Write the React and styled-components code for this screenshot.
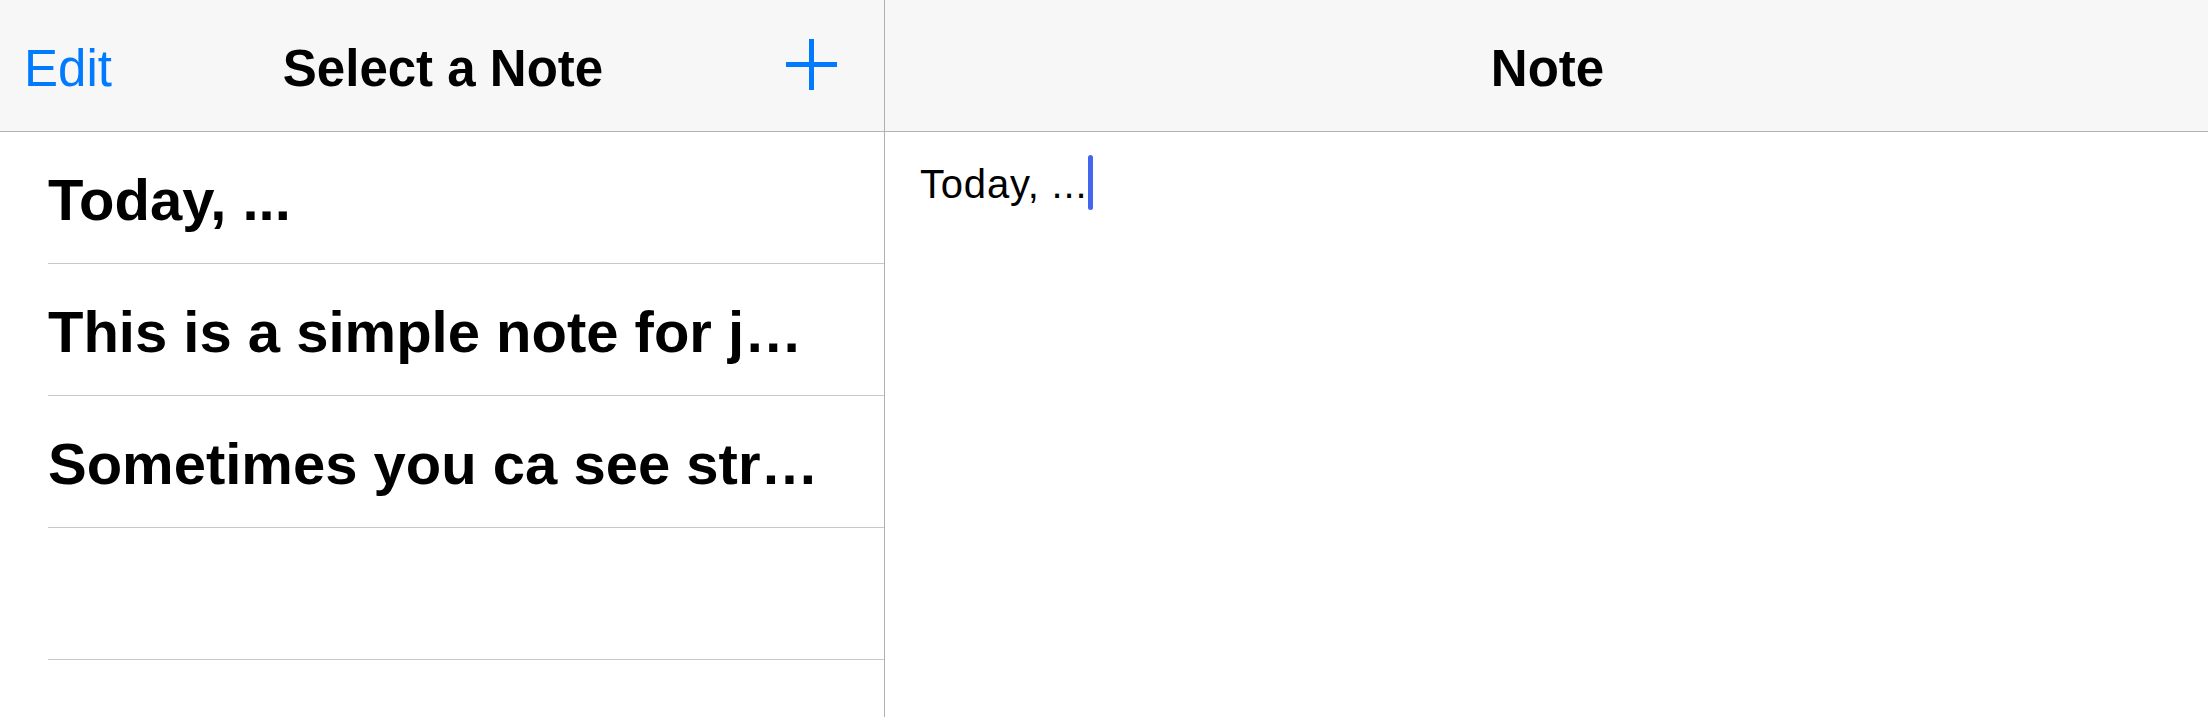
import React from "react";
import styled, { createGlobalStyle } from "styled-components";

const Global = createGlobalStyle`
  html, body { margin: 0; padding: 0; background: #ffffff; }
  body { font-family: "Liberation Sans", Arial, sans-serif; color: #000; }
  * { box-sizing: border-box; }
`;

const Screen = styled.div`
  display: flex;
  width: 2208px;
  height: 717px;
  overflow: hidden;
  background: #ffffff;
`;

const Sidebar = styled.aside`
  width: 885px;
  flex: none;
  display: flex;
  flex-direction: column;
  border-right: 1px solid #b0b0b0;
`;

const Detail = styled.main`
  flex: 1;
  display: flex;
  flex-direction: column;
`;

const NavBar = styled.header`
  height: 132px;
  flex: none;
  padding: 6px 22px 0 24px;
  background: #f7f7f7;
  border-bottom: 1px solid #b4b4b4;
  display: grid;
  grid-template-columns: 1fr auto 1fr;
  align-items: center;
`;

const NavTitle = styled.h1`
  grid-column: 2;
  margin: 0;
  font-size: 51px;
  font-weight: 700;
  line-height: normal;
  white-space: nowrap;
`;

const NavButton = styled.button`
  all: unset;
  grid-column: ${(p) => (p.$right ? 3 : 1)};
  justify-self: ${(p) => (p.$right ? "end" : "start")};
  margin-right: ${(p) => (p.$right ? 25 : 0)}px;
  color: #007aff;
  font-family: "Liberation Sans", Arial, sans-serif;
  font-size: 51px;
  line-height: normal;
  cursor: pointer;
  display: flex;
  align-items: center;
`;

const PlusIcon = styled.svg`
  display: block;
  width: 51px;
  height: 51px;
  margin-bottom: 9px;
`;

const List = styled.ul`
  list-style: none;
  margin: 0;
  padding: 0;
`;

const Row = styled.li`
  height: 132px;
  margin-left: 48px;
  padding-top: 3px;
  border-bottom: 1px solid #c8c7cc;
  display: flex;
  align-items: center;
  font-size: 58px;
  font-weight: 700;
  white-space: nowrap;
  overflow: hidden;
`;

const Editor = styled.div`
  padding: 23px 0 0 35px;
  font-size: 40px;
  line-height: 54px;
  letter-spacing: 0.8px;
  white-space: pre;
`;

const Caret = styled.span`
  display: inline-block;
  width: 5px;
  height: 55px;
  margin-left: 1px;
  border-radius: 3px;
  background: #4466ee;
  vertical-align: -12px;
`;

const notes = [
  "Today, ...",
  "This is a simple note for j…",
  "Sometimes you ca see str…",
  "",
];

export default function App() {
  return (
    <>
      <Global />
      <Screen>
        <Sidebar>
          <NavBar>
            <NavButton>Edit</NavButton>
            <NavTitle>Select a Note</NavTitle>
            <NavButton $right aria-label="Add note">
              <PlusIcon viewBox="0 0 51 51">
                <path
                  d="M25.5 0 V51 M0 25.5 H51"
                  stroke="#007aff"
                  strokeWidth="5"
                  fill="none"
                />
              </PlusIcon>
            </NavButton>
          </NavBar>
          <List>
            {notes.map((n, i) => (
              <Row key={i}>{n}</Row>
            ))}
          </List>
        </Sidebar>
        <Detail>
          <NavBar>
            <NavTitle>Note</NavTitle>
          </NavBar>
          <Editor>
            Today, ...
            <Caret />
          </Editor>
        </Detail>
      </Screen>
    </>
  );
}
